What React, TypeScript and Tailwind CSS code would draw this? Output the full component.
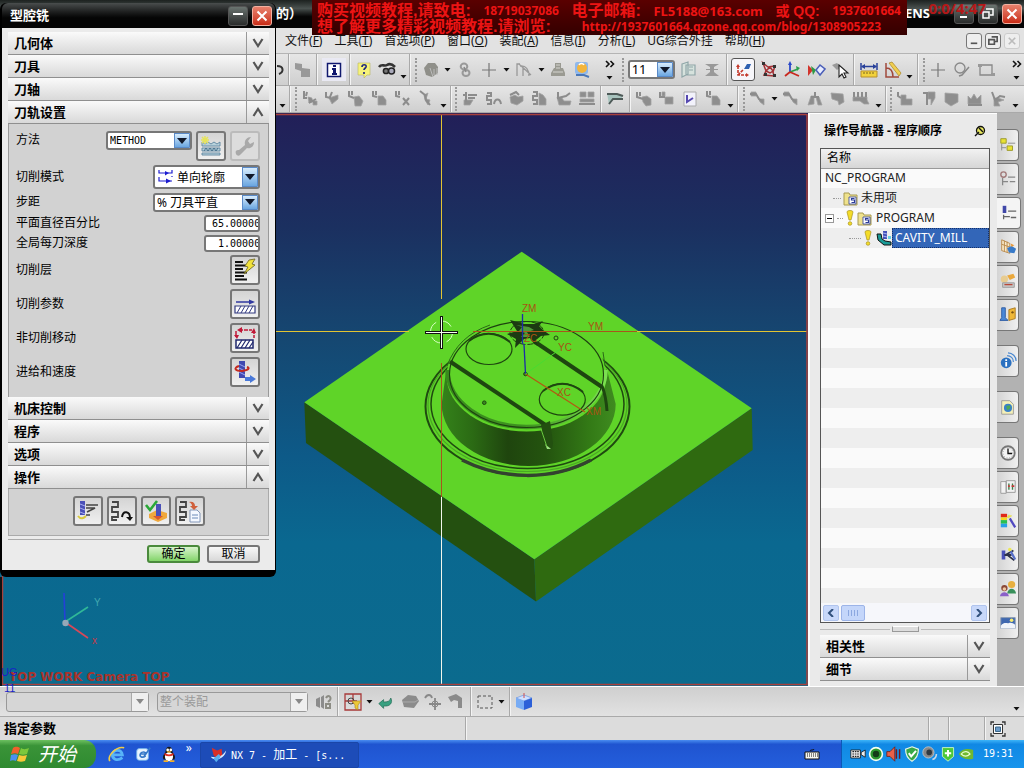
import React from "react";

type Kids = { children?: React.ReactNode };

const CJK = "font-['Noto_Sans','Noto_Sans_CJK_SC',sans-serif]";

/* ---------- small drawing helpers ---------- */

function Ic({ children, size = "size-5" }: Kids & { size?: string }) {
  return (
    <svg viewBox="0 0 20 20" className={`${size} shrink-0`} fill="none" aria-hidden="true">
      {children}
    </svg>
  );
}

function Tool({ label, children, active, framed }: Kids & { label: string; active?: boolean; framed?: boolean }) {
  const look = active
    ? "h-[23px] w-6 border border-[#555] rounded-[3px] bg-[#f6f6fa]"
    : framed
      ? "h-[23px] w-6 bg-[#e9e9f3]"
      : "h-[22px] w-5";
  return (
    <button type="button" aria-label={label} className={`flex shrink-0 items-center justify-center ${look}`}>
      {children}
    </button>
  );
}

function Caret({ low }: { low?: boolean }) {
  return (
    <svg viewBox="0 0 7 4" className={`h-1 w-[7px] shrink-0 ${low ? "mt-3.5" : ""}`} aria-hidden="true">
      <path d="M0.5 0h6L3.5 3.6z" fill="#111" />
    </svg>
  );
}

function Sep() {
  return <span className="h-full w-0.5 shrink-0 border-l border-r border-l-[#a9a9a9] border-r-[#f4f4f4]" />;
}

function Grip() {
  return <span className="h-6 w-0.5 shrink-0 border-l-2 border-dotted border-[#999]" />;
}

function More() {
  return (
    <div className="flex h-6 w-3 shrink-0 flex-col items-center justify-between py-0.5">
      <svg viewBox="0 0 10 8" className="h-2 w-2.5" fill="none" stroke="#111" strokeWidth="1.6" aria-hidden="true">
        <path d="M1 1l3 3-3 3M5.5 1l3 3-3 3" />
      </svg>
      <Caret />
    </div>
  );
}

/* ---------- grey tool path glyphs ---------- */

const greyShapes: string[][] = [
  ["M4 2v7h3M7 3l-1 4M9 9l6 5M9 14l7-4", "M8 8l4 1v4l-3 1zM13 12h4v4h-4z"],
  ["M3 3v5l5 1M9 3l-2 5", "M6 9l9-3v4l-6 5z"],
  ["M3 2v5l5 2M6 2v4", "M8 8l5-1 4 5-2 5H9z"],
  ["M3 2v5l4 1M6 2v4", "M8 7h5l3 4v5H8z"],
  ["M3 2v5l4 1M6 2v4M10 9l6 7M16 9l-6 7", ""],
  ["M4 2l5 4 1 5 4 5", "M8 6l4-2-2 6 4 1-2 5-3-5z"],
  ["M6 3v10M3 6h4M8 6h9M8 9h7", "M4 11h9l-3 5H4z"],
  ["M3 4h4v3H3v4h4v4H3M10 15c1-6 6-6 7 0", ""],
  ["M3 6l6-3 3 3", "M3 8l5-2 3 2 5-1v5l-6 4-6-2z"],
  ["M3 3h4v4H3v4h4v4H3", "M9 4l4 2 3 4v6H9v-4z"],
  ["M4 3v6l8-2 4-3", "M3 8l5 1 2 3h7l-1 4H5z"],
  ["M2 15h16", "M3 3h6v5H3zM11 3h6v5h-6zM3 10h14v3H3z"],
  ["M3 3v5l6 2M6 3v4", "M8 8l5-1 4 3v6l-5 1-3-4z"],
  ["M3 3v5h5", "M8 8h8v7H8zM5 3h3v4H5z"],
  ["M2 5l6 0 3 5 4 3", "M3 3h5v4H3zM11 10h5v6l-4-3z"],
  ["M10 3v5M6 8h8", "M3 16l3-9h3v8zM11 8h3l3 8h-4z"],
  ["", "M3 4l12 1 1 8-5 3-1-4-6-2z"],
  ["M3 3v5M7 3v5M11 3v5M15 3v5", "M2 8h14v3l2 4h-5l-4-3H2z"],
  ["M3 3v4l3 2", "M6 6h5v4h6v6H6z"],
  ["M4 4h4v12", "M9 3h7v6l-4 7v-6H9z"],
  ["", "M3 4l13 1v8l-7 4-6-4z"],
  ["M3 16h14", "M3 15V7l3 3 3-5 3 5 4-4v9z"],
  ["M3 3l3 8 5-4 5 1", "M5 9h4l6 2-6 2 2 4H5z"],
];

function Grey({ n }: { n: number }) {
  const [line, area] = greyShapes[n];
  return (
    <Tool label={`加工工具 ${n + 1}`}>
      <Ic>
        {area && <path d={area} fill="#8e8e8e" stroke="#a2a2a2" strokeWidth="0.8" />}
        {line && <path d={line} stroke="#8c8c8c" strokeWidth="2" />}
      </Ic>
    </Tool>
  );
}

/* ---------- top bars ---------- */

function WinButton({ label, red, children }: Kids & { label: string; red?: boolean }) {
  return (
    <button
      type="button"
      aria-label={label}
      className={`flex size-5 shrink-0 items-center justify-center rounded-[3px] border ${
        red
          ? "border-[#f2b0a0] bg-linear-to-b from-[#e8806c] to-[#c92a14]"
          : "border-[#555] bg-linear-to-b from-[#6a7470] to-[#2a2c2c]"
      }`}
    >
      <svg viewBox="0 0 14 14" className="size-3.5" fill="none" stroke="#fff" strokeWidth="2" aria-hidden="true">
        {children}
      </svg>
    </button>
  );
}

const cross = <path d="M2.5 2.5l9 9M11.5 2.5l-9 9" />;

function TitleBar() {
  return (
    <header className="flex h-7 shrink-0 items-center bg-linear-to-b from-[#1d2220] via-[#4a5250] via-30% to-[#050505] to-60% pl-[276px] text-[13px] font-bold text-white">
      <span>的）</span>
      <span className="ml-auto">ENS</span>
      <div className="ml-6 flex gap-1 pr-0.5">
        <WinButton label="最小化">
          <path d="M3 10h7" />
        </WinButton>
        <WinButton label="还原">
          <path d="M5 2h7v6H9M2 5h6v6H2z" strokeWidth="1.5" />
        </WinButton>
        <WinButton label="关闭" red>
          {cross}
        </WinButton>
      </div>
    </header>
  );
}

const menus: [string, string][] = [
  ["文件", "F"],
  ["工具", "T"],
  ["首选项", "P"],
  ["窗口", "O"],
  ["装配", "A"],
  ["信息", "I"],
  ["分析", "L"],
  ["UG综合外挂", ""],
  ["帮助", "H"],
];

function MenuBar() {
  return (
    <nav className="flex h-[26px] shrink-0 items-center border-b border-[#b4b4b4] bg-[#e2e2e2] pl-[285px] text-xs text-[#111]">
      <div className="flex gap-3">
        {menus.map(([name, key]) => (
          <button type="button" key={name} className="shrink-0 whitespace-nowrap">
            {name}
            {key && (
              <>
                (<span className="underline">{key}</span>)
              </>
            )}
          </button>
        ))}
      </div>
      <div className="ml-auto flex gap-[3px] pr-1">
        {["M3 9h7", "M5 2h6v5H8M2 5h6v5H2z", "M3 3l7 7M10 3l-7 7"].map((d, i) => (
          <button
            type="button"
            key={d}
            aria-label={["最小化窗口", "还原窗口", "关闭窗口"][i]}
            className={`flex size-4 items-center justify-center rounded-[3px] border bg-[#eee] ${
              i === 2 ? "border-[#ccc] text-[#bbb]" : "border-[#777] text-[#555]"
            }`}
          >
            <svg viewBox="0 0 13 13" className="size-3" fill="none" stroke="currentColor" strokeWidth="1.8" aria-hidden="true">
              <path d={d} />
            </svg>
          </button>
        ))}
      </div>
    </nav>
  );
}

const bar = "flex shrink-0 items-center border-b border-b-[#a9a9a9] bg-linear-to-b from-[#e6e6e6] to-[#cfcfcf]";

function PlusIcon() {
  return (
    <Ic>
      <path d="M10 3v14M3 10h14" stroke="#777" strokeWidth="1.2" />
    </Ic>
  );
}

function ToolbarOne() {
  return (
    <div className={`${bar} h-8 gap-0.5 pl-[277px] pr-px`}>
      <div className="flex h-full w-[130px] shrink-0 items-center justify-between">
        <svg viewBox="0 0 8 12" className="h-3 w-2 shrink-0" fill="none" stroke="#333" strokeWidth="2" aria-hidden="true">
          <path d="M0 2c7 0 7 6 2 8" />
        </svg>
        <Sep />
        <Tool label="部件">
          <Ic>
            <path d="M2 3l7 1v4l8 1v8H8v-6l-6-2z" fill="#999" />
          </Ic>
        </Tool>
        <Sep />
        <Tool label="信息" framed>
          <Ic>
            <rect x="3.5" y="3.5" width="13" height="13" fill="#fff" stroke="#10186e" strokeWidth="1.5" />
            <path d="M9 5h3v2H9zM8 8h4v5h1v2H8v-2h1v-3H8z" fill="#10186e" />
          </Ic>
        </Tool>
        <Sep />
        <Tool label="帮助">
          <Ic>
            <path d="M4 3h12v12h-3l-3 3v-3H4z" fill="#f6f27a" stroke="#b9b560" strokeWidth="0.6" />
            <path d="M8 7c0-3 5-3 4 0-.5 1.300-2 1.500-2 3M10 12v2" stroke="#222a80" strokeWidth="1.7" />
          </Ic>
        </Tool>
        <Tool label="查找">
          <Ic>
            <path d="M2 7c3-4 5 0 8-2s6 0 8 2" stroke="#333" strokeWidth="2.600" />
            <circle cx="9" cy="11" r="2.600" fill="#777" stroke="#222" strokeWidth="1.500" />
            <circle cx="14.500" cy="11" r="3" fill="#aab" stroke="#222" strokeWidth="1.500" />
          </Ic>
        </Tool>
        <Caret low />
      </div>
      <div className="flex h-full w-[207px] shrink-0 items-center justify-between">
        <Sep />
        <Grip />
        <Tool label="可视化">
          <Ic>
            <path d="M3 8l4-5h7l3 4v6l-6 4-6-2z" fill="#8f8f89" />
            <path d="M13 9v6M16 8v7M9 8l3 9" stroke="#bbb" strokeWidth="1" />
          </Ic>
        </Tool>
        <Caret />
        <Tool label="链接">
          <Ic>
            <ellipse cx="9" cy="6.500" rx="3.300" ry="3" stroke="#999" strokeWidth="2" />
            <ellipse cx="11" cy="13" rx="3.500" ry="3" stroke="#999" strokeWidth="2" />
            <path d="M9 7l2 5" stroke="#888" strokeWidth="1.500" />
          </Ic>
        </Tool>
        <Tool label="点">
          <PlusIcon />
        </Tool>
        <Caret />
        <Tool label="曲线">
          <Ic>
            <path d="M3 16V4h3M6 6c6-1 9 4 9 10M5 4l12 11M9 16V8" stroke="#999" strokeWidth="1.300" />
          </Ic>
        </Tool>
        <Caret />
        <Tool label="图层">
          <Ic>
            <path d="M7 3h6v5h2l2 5v3H3v-3l3-5h1z" fill="#9a9a92" />
            <path d="M5 12h10M8 5h4M8 8h4" stroke="#d5d5d0" />
          </Ic>
        </Tool>
        <Tool label="渲染">
          <Ic>
            <rect x="3" y="2" width="13" height="12" rx="2" fill="#8fb8ec" />
            <circle cx="10" cy="8" r="5" fill="#f3b53c" />
            <path d="M7 5c1-2 4-2 5 0" stroke="#fff" strokeWidth="1.500" />
            <path d="M4 15h8l5 2" stroke="#4b78b8" strokeWidth="2" />
          </Ic>
        </Tool>
        <span className="w-1" />
        <More />
      </div>
      <div className="ml-1 flex h-full flex-1 items-center justify-between">
        <Grip />
        <DropDown label="图层号" value="11" className="h-[19px] w-[47px]" size="text-[13px]" />
        <Tool label="图层设置">
          <Ic>
            <path d="M4 4l6-2v12l-6 3zM8 5h9v10H8z" fill="#d6e2dd" stroke="#8fa6a8" strokeWidth="1.200" />
            <path d="M11 7h4M11 10h4" stroke="#8fa6a8" />
          </Ic>
        </Tool>
        <Tool label="移动图层">
          <Ic>
            <path d="M3 4h14l-5 3h-4zM3 16h14l-5-4h-4zM8 7h4v5H8zM4 9h12v1H4z" fill="#999" />
          </Ic>
        </Tool>
        <Sep />
        <Tool label="坐标系方位" active>
          <Ic>
            <path d="M5 6v9h9M5 15l5-5" stroke="#c3392c" strokeWidth="1.600" strokeDasharray="3 1" />
            <path d="M3 7l2-3 2 3M13 13l3 2-3 2" fill="#c3392c" />
            <path d="M11 9l3-5h4l-2 5z" fill="#2d5fb0" />
          </Ic>
        </Tool>
        <Tool label="坐标变换">
          <Ic>
            <path d="M4 3l3 8-2 4 10 1-1-4 2-6-7 1z M7 11l4 2 3-2-3-4z" stroke="#a33034" strokeWidth="1.500" />
            <path d="M3 2h3v3H3zM14 5h3v3h-3zM5 13h3v3H5zM14 14h3v3h-3z" fill="#333" />
          </Ic>
        </Tool>
        <Tool label="动态坐标系">
          <Ic>
            <path d="M8 12V4" stroke="#2a48c8" strokeWidth="1.800" />
            <path d="M8 12l8-3" stroke="#2aa04a" strokeWidth="1.800" />
            <path d="M8 12l-5 4M8 12l9 4" stroke="#c8281e" strokeWidth="1.800" />
            <path d="M6 5l2-4 2 4z" fill="#2a48c8" />
            <path d="M14 6l4 2-3 3z" fill="#2aa04a" />
          </Ic>
        </Tool>
        <Tool label="方向">
          <Ic>
            <path d="M2 5l5 5-5 6z" fill="#d2342c" />
            <path d="M5 6l5 4-3 5z" fill="#2f9a44" />
            <path d="M10 10l4-5 5 4-5 6z" fill="#e8ecff" stroke="#4a5eb8" strokeWidth="1.500" />
          </Ic>
        </Tool>
        <Tool label="选择">
          <Ic>
            <path d="M2 5l5-2 4 4-4 3z" fill="#999" />
            <path d="M9 5v12l3-3 2 4 2-1-2-4h4z" fill="#fff" stroke="#222" strokeWidth="1.100" />
          </Ic>
        </Tool>
        <Sep />
        <Tool label="测量距离">
          <Ic>
            <path d="M2 3v7M18 3v7M3 6.500h14" stroke="#28409a" strokeWidth="1.500" />
            <path d="M2 6.500l4-2.500v5zM18 6.500l-4-2.500v5z" fill="#28409a" />
            <path d="M2 11h16v6H2z" fill="#f2d23c" stroke="#b8902c" />
            <path d="M5 12v2M8 12v2M11 12v2M14 12v2" stroke="#7b6420" />
          </Ic>
        </Tool>
        <Tool label="测量角度">
          <Ic>
            <path d="M3 3v14h13M3 8c5 0 7 4 7 9" stroke="#a04a3c" strokeWidth="1.500" />
            <path d="M6 3l3-1 9 11-2 3z" fill="#f0cf50" stroke="#b08c30" strokeWidth="0.800" />
          </Ic>
        </Tool>
        <Caret low />
        <Sep />
        <Grip />
        <Tool label="草图点">
          <PlusIcon />
        </Tool>
        <Tool label="圆">
          <Ic>
            <circle cx="8" cy="8" r="5" stroke="#888" strokeWidth="1.300" />
            <path d="M7 16l3-1 7-8" stroke="#888" strokeWidth="1.500" />
          </Ic>
        </Tool>
        <Tool label="矩形">
          <Ic>
            <path d="M4 5h12v10H4z" stroke="#888" strokeWidth="1.300" />
            <path d="M2 4h4v3H2zM15 13h4v3h-4z" fill="#999" />
          </Ic>
        </Tool>
        <span className="w-2" />
        <More />
      </div>
    </div>
  );
}

function ToolbarTwo() {
  return (
    <div className={`${bar} h-[27px] justify-between pl-[279px] pr-[5px]`}>
      <Caret low />
      <Sep />
      <Grip />
      {[0, 1, 2, 3, 4, 5].map((n) => (
        <Grey key={n} n={n} />
      ))}
      <Caret low />
      <Sep />
      <Grip />
      {[6, 7, 8, 9, 10, 11].map((n) => (
        <Grey key={n} n={n} />
      ))}
      <Sep />
      <Tool label="加工">
        <Ic>
          <path d="M2 4h9l6 3v4l-9-1-4 6" fill="#a8c4be" />
          <path d="M2 5h10l6 2M4 15l4-5h10" stroke="#4e5a58" strokeWidth="2" />
        </Ic>
      </Tool>
      <Sep />
      <Grey n={12} />
      <Grey n={13} />
      <Tool label="后处理">
        <Ic>
          <path d="M4 3h12v14H4z" fill="#f2f2fb" stroke="#aaa" />
          <path d="M7 6v7l6-4" stroke="#5548b0" strokeWidth="2" />
        </Ic>
      </Tool>
      <Grey n={3} />
      <Caret low />
      <Sep />
      <Grip />
      <Grey n={14} />
      <Caret />
      <Grey n={14} />
      <Grey n={15} />
      <Grey n={16} />
      <Grey n={17} />
      <Caret low />
      <Sep />
      <Grip />
      {[18, 19, 20, 21, 22].map((n) => (
        <Grey key={n} n={n} />
      ))}
      <Caret low />
    </div>
  );
}

function PromoBanner() {
  const han = "font-['Liberation_Sans','Noto_Sans_CJK_SC',sans-serif]";
  return (
    <aside className="absolute left-[312px] top-0 flex h-[35px] w-[595px] flex-col bg-linear-to-b from-[#5a0000] to-[#340000] pl-[5px] pr-1.5 pt-[3px] text-xs font-bold text-[#ec1414]">
      <p className="flex h-4 items-center justify-between whitespace-nowrap leading-4">
        <span className={`${han} text-base leading-4`}>购买视频教程,请致电:</span>
        <span className="leading-4">18719037086</span>
        <span className={`${han} text-base leading-4`}>电子邮箱:</span>
        <span className="text-[13px] leading-4">FL5188@163.com</span>
        <span className={`${han} text-[14px] leading-4`}>或 QQ:</span>
        <span className="leading-4">1937601664</span>
      </p>
      <p className="flex h-4 items-center justify-between whitespace-nowrap pr-5 leading-4">
        <span className={`${han} text-base leading-4`}>想了解更多精彩视频教程.请浏览:</span>
        <span className="leading-4">http://1937601664.qzone.qq.com/blog/1308905223</span>
      </p>
    </aside>
  );
}

/* ---------- shared form parts ---------- */

function DropDown({
  id,
  label,
  value,
  className,
  size = "text-xs",
  icon,
}: {
  id?: string;
  label?: string;
  value: string;
  className: string;
  size?: string;
  icon?: React.ReactNode;
}) {
  return (
    <div className={`relative flex shrink-0 items-center overflow-hidden rounded-[3px] border-2 border-[#777] bg-white ${className}`}>
      {icon}
      <select
        id={id}
        aria-label={label}
        className={`h-full w-full appearance-none bg-transparent pl-0.5 pr-4 text-black outline-none ${size} leading-[15px]`}
      >
        <option>{value}</option>
      </select>
      <span className="pointer-events-none absolute inset-y-0 right-0 flex w-4 items-center justify-center border border-[#5a8ac8] bg-linear-to-b from-[#d8ecfc] to-[#6aa6e0]">
        <svg viewBox="0 0 10 6" className="h-1.5 w-2.5" aria-hidden="true">
          <path d="M0 0h10L5 6z" fill="#10182a" />
        </svg>
      </span>
    </div>
  );
}

function Section({ title, open }: { title: string; open?: boolean }) {
  return (
    <button
      type="button"
      aria-expanded={!!open}
      className="flex h-[23px] w-full shrink-0 items-stretch border-b border-[#8f8f8f] bg-linear-to-b from-[#fafafa] to-[#d9d9d9] text-left text-[13px] font-bold text-black"
    >
      <span className="flex flex-1 items-center pl-1.5 leading-none">{title}</span>
      <span className="flex w-[23px] items-center justify-center border-l border-[#999]">
        <svg viewBox="0 0 12 10" className="h-2.5 w-3" fill="none" stroke="#555" strokeWidth="2.200" aria-hidden="true">
          <path d={open ? "M1.500 9L6 2l4.500 7" : "M1.500 1L6 8l4.500-7"} />
        </svg>
      </span>
    </button>
  );
}

function IconButton({ label, id, children, disabled }: Kids & { label: string; id?: string; disabled?: boolean }) {
  return (
    <button
      type="button"
      id={id}
      aria-label={label}
      disabled={disabled}
      className={`flex size-[30px] shrink-0 items-center justify-center rounded-[3px] border-2 ${
        disabled ? "border-[#bbb] bg-[#dcdcdc]" : "border-[#777] bg-linear-to-b from-[#d4d4d4] to-[#f0f0f0]"
      }`}
    >
      <svg viewBox="0 0 24 24" className="size-6" fill="none" aria-hidden="true">
        {children}
      </svg>
    </button>
  );
}

/* ---------- operation dialog ---------- */

function Row({ name, id, children, h, top }: Kids & { name: string; id: string; h: string; top?: boolean }) {
  return (
    <div className={`flex ${top ? "items-start" : "items-center"} ${h}`}>
      <label htmlFor={id} className="mr-auto leading-[18px]">
        {name}
      </label>
      {children}
    </div>
  );
}

const inputStyle =
  "h-[17px] w-14 rounded-[3px] border-2 border-[#777] bg-white pl-1.5 font-['DejaVu_Sans_Mono',monospace] text-[10px] text-black outline-none";

function MillDialog() {
  return (
    <section
      aria-label="型腔铣"
      className="absolute left-0 top-[3px] flex w-[276px] flex-col rounded-t-md rounded-b-md bg-black pb-[7px] pl-0.5 pr-px text-xs text-black"
    >
      <header className="flex h-[25px] items-center gap-1 rounded-t-md bg-linear-to-b from-[#4a4e4e] to-[#050505] to-60% pl-2 pr-[3px] text-[13px] font-bold text-white">
        <h1 className="mr-auto">型腔铣</h1>
        <WinButton label="收起">
          <path d="M2 5h10" />
        </WinButton>
        <WinButton label="关闭对话框" red>
          {cross}
        </WinButton>
      </header>
      <div className="bg-[#ebebeb] px-1.5 pb-[7px] pt-1">
        <Section title="几何体" />
        <Section title="刀具" />
        <Section title="刀轴" />
        <Section title="刀轨设置" open />
        <div className="flex flex-col gap-1 border-x border-[#999] bg-[#d2d2d2] pb-2.5 pl-[7px] pr-2 pt-[7px]">
          <Row name="方法" id="method" h="h-[30px]" top>
            <DropDown id="method" value="METHOD" className="mr-1 h-[19px] w-[86px]" size="font-['DejaVu_Sans_Mono',monospace] text-[10px]" />
            <div className="flex gap-1">
              <IconButton label="新建方法">
                <path d="M3 8l3 2 3-2 3 2 3-2 3 2 3-2v4H3zM3 14h18v3H3zM3 19h18v2H3z" fill="#b8d2dc" stroke="#5d86a0" strokeWidth="0.900" />
                <path d="M5 17l2-3 2 3 2-3 2 3 2-3 2 3 2-3" stroke="#46708c" />
                <path d="M6 2v8M2 6h8M3 3l6 6M9 3L3 9" stroke="#e6e45a" strokeWidth="1.500" />
              </IconButton>
              <IconButton label="编辑方法" disabled>
                <path d="M3 20c-1-3 0-4 3-4l6-5c-1-5 2-8 6-8l-3 4 2 3 4-2c0 5-4 7-7 6l-7 7c-1 1-3 1-4-1z" fill="#a9a9a9" />
              </IconButton>
            </div>
          </Row>
          <Row name="切削模式" id="pattern" h="h-6">
            <DropDown
              id="pattern"
              value="单向轮廓"
              className="h-6 w-[107px]"
              icon={
                <svg viewBox="0 0 18 16" className="ml-0.5 h-4 w-[18px] shrink-0" fill="none" stroke="#1c1cd0" strokeWidth="1.200" aria-hidden="true">
                  <path d="M2 1v3h13V1M2 8v4h13M15 8v-1" />
                  <path d="M8 2l4 2-4 2.500zM9 9.500l5 2.500-5 2.500z" fill="#1c1cd0" stroke="none" />
                </svg>
              }
            />
          </Row>
          <Row name="步距" id="step" h="h-[18px]">
            <DropDown id="step" value="% 刀具平直" className="h-[19px] w-[107px]" />
          </Row>
          <Row name="平面直径百分比" id="percent" h="h-4">
            <input id="percent" defaultValue="65.00000" className={inputStyle} />
          </Row>
          <Row name="全局每刀深度" id="depth" h="h-4">
            <input id="depth" defaultValue=" 1.00000" className={inputStyle} />
          </Row>
          <Row name="切削层" id="levels" h="h-[30px]">
            <IconButton id="levels" label="切削层">
              <path d="M2 4h8M2 7.500h12M2 11h8M2 14.500h12M2 18h9M2 21.500h12" stroke="#111" strokeWidth="2" />
              <path d="M16 2l6-1-3 5 3 1-11 9 4-7-3-1z" fill="#f2e23c" stroke="#77702a" strokeWidth="0.900" />
            </IconButton>
          </Row>
          <Row name="切削参数" id="params" h="h-[30px]">
            <IconButton id="params" label="切削参数">
              <path d="M3 10h14" stroke="#3038a0" strokeWidth="1.500" />
              <path d="M16 7.500l6 2.500-6 2.500z" fill="#3038a0" />
              <path d="M2 14h20v7H2z" fill="#fff" stroke="#333a80" strokeWidth="1.200" />
              <path d="M4 21l4-7M8 21l4-7M12 21l4-7M16 21l4-7" stroke="#333a80" />
            </IconButton>
          </Row>
          <Row name="非切削移动" id="noncut" h="h-[30px]">
            <IconButton id="noncut" label="非切削移动">
              <path d="M3 5v6M6 4h13M21 4v8" stroke="#c01838" strokeWidth="1.500" strokeDasharray="4 1" />
              <path d="M1 9h5l-2 4zM9 1v6L4 4zM18 7l3-5 2 5z" fill="#c01838" />
              <path d="M3 14h17v8H3z" fill="#fff" stroke="#20286e" strokeWidth="1.500" />
              <path d="M4 22l5-8M8 22l5-8M12 22l5-8M16 22l4-6" stroke="#20286e" strokeWidth="1.200" />
            </IconButton>
          </Row>
          <Row name="进给和速度" id="feeds" h="h-[30px]">
            <IconButton id="feeds" label="进给和速度">
              <path d="M6 1h6v17H6z" fill="#4048b0" />
              <path d="M6 4l6 3M6 8l6 3M6 12l6 3" stroke="#98a4f0" />
              <path d="M6 6c-6 2-4 5 3 5 7-1 8-3 5-4" stroke="#c42a20" strokeWidth="2" />
              <path d="M12 17h5v-2l6 4-6 4v-2h-5z" fill="#4878d8" />
            </IconButton>
          </Row>
        </div>
        <Section title="机床控制" />
        <Section title="程序" />
        <Section title="选项" />
        <Section title="操作" open />
        <div className="flex h-[47px] justify-center gap-1 border-x border-b border-[#aaa] bg-[#d2d2d2] pt-[7px]">
          <IconButton label="生成">
            <path d="M4 2h5v14H4z" fill="#4a50b8" />
            <path d="M4 5l5 2M4 9l5 2M4 13l5 2" stroke="#a8b0f0" />
            <path d="M10 6h12M10 9h9l-8 4M10 16h4" stroke="#444" strokeWidth="1.600" />
            <path d="M2 17c3 4 6 2 8 0" stroke="#d8c93c" strokeWidth="2" />
          </IconButton>
          <IconButton label="重播">
            <path d="M2 3h6v5H2v5h6v5H2v3h5" stroke="#444" strokeWidth="1.800" />
            <path d="M12 18c1-7 8-6 8 1" stroke="#111" strokeWidth="2" />
            <path d="M16 18h7l-3 4z" fill="#111" />
          </IconButton>
          <IconButton label="确认">
            <path d="M5 15l8-4 10 3v5l-9 4-9-4z" fill="#f0a83c" />
            <path d="M9 17h10l-5 4z" fill="#d85830" />
            <path d="M12 5h5v12h-5z" fill="#4a50b8" />
            <path d="M2 6l4 5 7-9" stroke="#2aa838" strokeWidth="2.600" />
          </IconButton>
          <IconButton label="列表">
            <path d="M2 3h6v5H2v5h6v5H2v3h5" stroke="#444" strokeWidth="1.800" />
            <path d="M12 11h7l3 3v9H12z" fill="#f4f8ff" stroke="#8296b8" />
            <path d="M14 16h6M14 19h6" stroke="#6a8ab8" />
            <path d="M11 3c4-1 6 1 6 4h3l-4 4-4-4h2c0-2-1-3-3-4z" fill="#d0603c" />
          </IconButton>
        </div>
        <footer className="mt-[3px] flex justify-end gap-[7px] border-t border-[#aaa] pr-[9px] pt-[5px]">
          <button type="button" className="flex h-[18px] w-[53px] items-center justify-center rounded-[3px] border-2 border-[#4a8a3c] bg-linear-to-b from-[#d8f4cc] to-[#82d468] leading-none">
            确定
          </button>
          <button type="button" className="flex h-[18px] w-[53px] items-center justify-center rounded-[3px] border-2 border-[#777] bg-linear-to-b from-[#f8f8f8] to-[#d8d8d8] leading-none">
            取消
          </button>
        </footer>
      </div>
    </section>
  );
}

/* ---------- model view ---------- */

function ModelView() {
  return (
    <main className="min-w-0 flex-1 overflow-hidden bg-[#0a6a90]">
      <svg viewBox="0 113 808 573" className="h-full w-full" preserveAspectRatio="xMidYMid slice" role="img" aria-label="TOP WORK">
        <defs>
          <linearGradient id="sky" x1="0" y1="0" x2="0" y2="1">
            <stop offset="0" stopColor="#221f58" />
            <stop offset="0.200" stopColor="#1b3060" />
            <stop offset="0.400" stopColor="#154872" />
            <stop offset="0.600" stopColor="#0d5a88" />
            <stop offset="0.750" stopColor="#0a6890" />
            <stop offset="1" stopColor="#0b6b8e" />
          </linearGradient>
          <linearGradient id="wall" x1="0" y1="0" x2="1" y2="0">
            <stop offset="0" stopColor="#34821a" />
            <stop offset="0.180" stopColor="#2b6a14" />
            <stop offset="0.380" stopColor="#1f450e" />
            <stop offset="0.600" stopColor="#24540f" />
            <stop offset="0.850" stopColor="#337a16" />
            <stop offset="1" stopColor="#3f8c20" />
          </linearGradient>
          <linearGradient id="rim" x1="0" y1="0" x2="1" y2="0">
            <stop offset="0" stopColor="#388a1c" />
            <stop offset="0.500" stopColor="#3f9420" />
            <stop offset="1" stopColor="#7be050" />
          </linearGradient>
        </defs>
        <rect x="0" y="113" width="808" height="573" fill="url(#sky)" />
        <path d="M304.300 402.300L534.300 559.300L536 601.500L306 443z" fill="#245010" />
        <path d="M534.300 559.300L751.700 408.300L752.700 450L536 601.500z" fill="#2f6a10" />
        <path d="M521.700 251.700L751.700 408.300L534.300 559.300L304.300 402.300z" fill="#5fd428" />

        <g fill="none">
          <ellipse cx="527.500" cy="406.500" rx="102" ry="69" stroke="#1f4a10" strokeWidth="2" />
          <ellipse cx="527.500" cy="405" rx="99.500" ry="66.500" stroke="#4aa824" strokeWidth="1.200" />
          <ellipse cx="527.500" cy="404" rx="96.500" ry="64.500" stroke="#1f4a10" strokeWidth="1.500" />
          <path d="M462 460c40 20 90 21 129 0" stroke="#33422f" strokeWidth="3.500" />
        </g>
        <path d="M446.500 368L441.700 404A87 62 0 0 0 615.700 404L606.500 368A80 58 0 0 1 446.500 368z" fill="url(#wall)" />
        <ellipse cx="526.500" cy="376" rx="80" ry="55.500" fill="#5fd428" />
        <path d="M447.500 370A79 57 0 0 0 605.500 370" stroke="url(#rim)" strokeWidth="4.500" fill="none" />
        <ellipse cx="526.500" cy="374.500" rx="77" ry="53" fill="none" stroke="#1d4010" strokeWidth="1.100" />
        <path d="M447 366Q458 336 490 325M605 366l-2-14" stroke="#2b6a18" fill="none" />

        <g fill="none" stroke="#1e4610">
          <ellipse cx="489" cy="349" rx="23" ry="15.500" strokeWidth="1.200" />
          <path d="M469 341Q489 326 510 342" strokeWidth="2" />
          <ellipse cx="562.300" cy="399.500" rx="23" ry="15.700" strokeWidth="1.200" />
          <path d="M543 391Q563 376 583 392" strokeWidth="2" />
          <path d="M450 361.500L547 426" strokeWidth="4" />
          <path d="M536.700 343L602 387" strokeWidth="4" />
          <path d="M602 386q4 10 5 25" strokeWidth="3" />
          <ellipse cx="527" cy="333" rx="17" ry="11.500" strokeWidth="1" strokeDasharray="6 2" />
          <circle cx="484.300" cy="402.700" r="1.800" fill="#3a8a20" />
          <circle cx="556" cy="338" r="2" />
          <circle cx="525.500" cy="374" r="1.800" fill="#3a8a20" />
        </g>
        <path d="M541 425l9-4 3 22-1 6-6 0z" fill="#235010" />
        <path d="M545 444l6 5h-4z" fill="#9be080" />
        <path d="M541 429l6 18" stroke="#69c840" fill="none" />
        <path
          d="M510 320l8 2 6 2h10l9-3-4 5 4 4 7 5-9 1-5 4 2 6-4-2-4-6-6 1-5 5-4 4 1-9-9-5 10-3z"
          fill="#1c3a12"
        />
        <path d="M516 325l6 2-3 4 6 2-4 4 9 0-3-5 7-2-5-3" fill="#4e9a38" />

        <g fill="none" strokeWidth="1" shapeRendering="crispEdges">
          <path d="M276 331.500H409M637 331.500H807M441.500 114V299" stroke="#e2c432" />
          <path d="M473 331.500H637M441.500 363V497" stroke="#a8561c" />
          <path d="M441.500 497V684" stroke="#f2f6ec" />
        </g>
        <g fill="none">
          <circle cx="441.500" cy="332" r="11" stroke="#d6ffc0" strokeDasharray="12 5" />
          <path d="M441.500 316V349M425 332.500H458" stroke="#111" strokeWidth="3" />
          <path d="M441.500 317V348M426 332.500H457" stroke="#f4fff0" strokeWidth="1" />
        </g>

        <path d="M522.500 314V344" stroke="#1c2ca8" strokeWidth="1.300" />
        <path d="M524 344l1.500 30" stroke="#1c2ca8" strokeWidth="1.300" />
        <path d="M525.500 374L585 412" stroke="#b45812" strokeWidth="1.200" />
        <path d="M525.500 374L577 337" stroke="#48dc30" strokeWidth="1" />
        <g fill="#a85214" className="font-['Liberation_Sans',sans-serif] text-[10px]">
          <text x="522" y="312">ZM</text>
          <text x="588" y="330">YM</text>
          <text x="524" y="342">ZC</text>
          <text x="558" y="351">YC</text>
          <text x="557" y="396">XC</text>
          <text x="586" y="415">XM</text>
        </g>

        <g strokeWidth="1.600">
          <path d="M65 622L64 593" stroke="#2440d8" />
          <path d="M65 622L88 607" stroke="#30b898" />
          <path d="M65 622L88 638" stroke="#d84858" />
        </g>
        <circle cx="65.500" cy="623" r="3.200" fill="#94a8b8" />
        <g className="font-['Liberation_Sans',sans-serif] text-[10px]">
          <text x="94" y="606" fill="#40a8b0">
            Y
          </text>
          <text x="92" y="644" fill="#c83848">
            x
          </text>
        </g>
        <text x="9" y="681" fill="#a8342c" className="font-['DejaVu_Sans',sans-serif] text-[12px] font-bold">
          TOP WORK Camera TOP
        </text>
        <path d="M2.500 684V114.500H806.500M807 114V684.500H2" stroke="#a8403c" strokeWidth="1.500" fill="none" />
        <text x="1" y="676" fill="#1822c8" className="font-['Liberation_Sans',sans-serif] text-[11px]">
          UG
        </text>
        <rect x="0" y="577" width="2" height="109" fill="#111" />
      </svg>
    </main>
  );
}

/* ---------- operation navigator ---------- */

function Folder() {
  return (
    <svg viewBox="0 0 16 16" className="size-4 shrink-0" aria-hidden="true">
      <path d="M1 3h5l1 2h7v10H1z" fill="#efe28c" stroke="#a89a50" />
      <path d="M6 7h7v7H6z" fill="#fff" stroke="#2c3c9a" strokeWidth="0.800" />
      <path d="M11.500 8.500h-3v1.500h3v2.500h-3" stroke="#2c3c9a" strokeWidth="1.200" fill="none" />
    </svg>
  );
}

function Bang() {
  return (
    <svg viewBox="0 0 8 16" className="h-4 w-2 shrink-0" aria-hidden="true">
      <path d="M1 2c0-2 6-2 6 0L5 10H3z" fill="#f4dc28" stroke="#a89420" strokeWidth="0.700" />
      <circle cx="4" cy="13.500" r="1.800" fill="#f4dc28" stroke="#a89420" strokeWidth="0.700" />
    </svg>
  );
}

function Dots({ w }: { w: string }) {
  return <span className={`${w} shrink-0 border-t border-dotted border-[#999]`} />;
}

const treeRows: React.ReactNode[] = [
  <span>NC_PROGRAM</span>,
  <div className="flex items-center gap-0.5 pl-2">
    <Dots w="w-2" />
    <Folder />
    <span>未用项</span>
  </div>,
  <div className="flex items-center gap-[3px]">
    <button type="button" aria-label="折叠" className="flex size-[9px] items-center justify-center border border-[#999] bg-white">
      <span className="h-px w-[5px] bg-black" />
    </button>
    <Dots w="w-1.5" />
    <Bang />
    <Folder />
    <span>PROGRAM</span>
  </div>,
  <div className="flex items-center pl-6">
    <Dots w="w-3" />
    <span className="w-[3px]" />
    <Bang />
    <svg viewBox="0 0 16 16" className="ml-1 size-4 shrink-0" aria-hidden="true">
      <path d="M1 4h4l1 5 3 2 6 1v3L8 15l-6-5z" fill="#1a9a96" stroke="#111" />
      <path d="M7 1h4v8H7z" fill="#4450b8" />
      <path d="M7 3l4 1M7 6l4 1" stroke="#a8b0f0" />
      <path d="M12 6h3v3h-3z" fill="#6ad0e0" />
    </svg>
    <span className="flex h-5 flex-1 items-center border border-dotted border-[#15306a] bg-[#3366b8] pl-0.5 text-white">
      CAVITY_MILL
    </span>
  </div>,
];

function ScrollArrow({ d, label }: { d: string; label: string }) {
  return (
    <button type="button" aria-label={label} className="flex size-4 items-center justify-center rounded-[2px] border border-[#b0c4ee] bg-[#c8d8fa]">
      <svg viewBox="0 0 8 8" className="size-2" fill="none" stroke="#30507c" strokeWidth="2" aria-hidden="true">
        <path d={d} />
      </svg>
    </button>
  );
}

function Navigator() {
  return (
    <section className="flex w-[189px] shrink-0 flex-col border-l-2 border-t border-white bg-[#eaeaea] pb-[5px] pl-1.5 pr-[3px] text-xs text-[#222]">
      <div className="flex h-[34px] shrink-0 items-center justify-between px-2 font-bold text-black">
        <h2>操作导航器 - 程序顺序</h2>
        <svg viewBox="0 0 12 12" className="size-3" aria-hidden="true">
          <circle cx="6.500" cy="5.500" r="4" fill="#e8e860" stroke="#111" strokeWidth="1.300" />
          <path d="M1 11l4-4M5 3l4 4" stroke="#111" strokeWidth="1.400" />
        </svg>
      </div>
      <div className="mx-1 flex min-h-0 flex-1 flex-col border border-[#555] bg-[#f6f6f6]">
        <div className="min-h-0 flex-1 overflow-hidden">
          <table className="w-full border-collapse">
            <thead>
              <tr>
                <th className="h-[19px] border-b border-[#999] bg-linear-to-b from-[#f2f2f2] to-[#d6d6d6] p-0 pl-1.5 text-left font-normal leading-none text-black">
                  名称
                </th>
              </tr>
            </thead>
            <tbody>
              {Array.from({ length: 22 }, (_, i) => (
                <tr key={i} className={i % 2 ? "bg-[#eeeeee]" : "bg-[#fafafa]"}>
                  <td className="h-5 p-0 pl-1 leading-none">{treeRows[i]}</td>
                </tr>
              ))}
            </tbody>
          </table>
        </div>
        <div className="flex h-[19px] shrink-0 items-center gap-0.5 bg-[#f6f7fb] px-0.5">
          <ScrollArrow label="向左滚动" d="M6 0L2 4l4 4" />
          <span className="flex h-4 w-6 items-center justify-center gap-0.5 rounded-[2px] border border-[#9cb4e8] bg-[#c4d6fa]">
            {[0, 1, 2, 3].map((n) => (
              <i key={n} className="h-1.5 w-px bg-[#8ca8e0]" />
            ))}
          </span>
          <span className="ml-auto">
            <ScrollArrow label="向右滚动" d="M2 0l4 4-4 4" />
          </span>
        </div>
      </div>
      <div className="mx-1 flex h-3 shrink-0 items-center gap-0.5">
        <span className="h-px flex-1 bg-[#bbb]" />
        <span className="h-1.5 w-[27px] border border-t-white border-[#999] bg-[#ddd]" />
        <span className="h-px flex-1 bg-[#bbb]" />
      </div>
      <div className="mx-1">
        <Section title="相关性" />
        <Section title="细节" />
      </div>
    </section>
  );
}

/* ---------- resource tabs ---------- */

const tabs: { name: string; gap?: boolean; active?: boolean; art: React.ReactNode }[] = [
  {
    name: "装配导航器",
    art: (
      <>
        <path d="M2 3h6v5H2zM9 11h6v5H9z" fill="#e8e234" stroke="#99962a" />
        <path d="M3 9v7M3 13h5M10 8h8" stroke="#888" />
      </>
    ),
  },
  {
    name: "部件导航器",
    art: (
      <>
        <circle cx="5" cy="5" r="3" stroke="#a07878" strokeWidth="1.500" />
        <path d="M4 9v8M4 13h6M10 8h8M12 13h6" stroke="#888" strokeWidth="1.400" />
      </>
    ),
  },
  {
    name: "操作导航器",
    active: true,
    art: (
      <>
        <path d="M3 2h4v8H3z" fill="#4048a8" />
        <path d="M4 12v5M4 14h7M9 8h9M12 15h6" stroke="#666" strokeWidth="1.400" />
      </>
    ),
  },
  {
    name: "机床导航器",
    art: (
      <>
        <path d="M3 2l9 4v11l-9-3zM3 7l9 3M6 3v12M9 4v12" fill="#f8e8c8" stroke="#b88848" />
        <path d="M9 11l5-2 5 3-2 5-6-1z" fill="#387ac8" />
        <path d="M13 6l4 2-3 2z" fill="#e89838" />
      </>
    ),
  },
  {
    name: "重用库",
    art: (
      <>
        <circle cx="6" cy="8" r="4" fill="#e8cc90" />
        <path d="M9 4l7-2 2 4-6 3z" fill="#eaa83c" />
        <path d="M4 12h13v5H4z" fill="#c8c8c8" stroke="#999" />
        <path d="M6 14h9" stroke="#b84838" strokeWidth="1.500" />
      </>
    ),
  },
  {
    name: "装配约束",
    art: (
      <>
        <path d="M3 2h4v11l3 3H1l2-3z" fill="#4a88d8" stroke="#2a58a0" />
        <path d="M11 4l7-2v12l-7 2z" fill="#f0b838" stroke="#a87820" />
        <circle cx="15" cy="7" r="1.300" fill="#7a5010" />
      </>
    ),
  },
  {
    name: "信息",
    gap: true,
    art: (
      <>
        <circle cx="8" cy="12" r="6" fill="#2a70c0" />
        <path d="M8 8v2M8 11v5" stroke="#fff" strokeWidth="2" />
        <path d="M9 4c4 0 7 3 7 7M10 1c5 0 9 4 9 9" stroke="#4a88d0" strokeWidth="1.300" />
      </>
    ),
  },
  {
    name: "网页",
    gap: true,
    art: (
      <>
        <path d="M3 3h9l4 4v11H3z" fill="#f4f0b8" stroke="#999" />
        <circle cx="10" cy="11" r="4.500" fill="#3a80c8" />
        <path d="M8 9l4-1 1 3-4 3z" fill="#4aa858" />
      </>
    ),
  },
  {
    name: "历史",
    gap: true,
    art: (
      <>
        <circle cx="10" cy="10" r="7.500" fill="#f4f4f4" stroke="#777" strokeWidth="2" />
        <path d="M10 5v5.500h4.500" stroke="#111" strokeWidth="1.500" />
        <circle cx="10" cy="10" r="5.500" stroke="#999" strokeDasharray="1 2" />
      </>
    ),
  },
  {
    name: "系统",
    art: (
      <>
        <path d="M2 4h6v13H2zM8 3h10v13H8z" fill="#f2f2f2" stroke="#999" />
        <path d="M11 6v7M15 6v7" stroke="#38804a" strokeWidth="1.500" />
        <path d="M10 9h2M14 9h3" stroke="#c83838" strokeWidth="2" />
      </>
    ),
  },
  {
    name: "调色板",
    art: (
      <>
        <path d="M2 2h7v4H2z" fill="#e02818" />
        <path d="M2 6h7v3H2z" fill="#f4d820" />
        <path d="M2 9h7v4H2z" fill="#28c050" />
        <path d="M2 13h7v4H2z" fill="#28a0e8" />
        <path d="M12 7l6 10" stroke="#5048c0" strokeWidth="2.500" />
        <path d="M11 3v4M9 6l5-2" stroke="#e8e040" strokeWidth="1.500" />
      </>
    ),
  },
  {
    name: "加工向导",
    art: (
      <>
        <path d="M3 5h4v10H3z" fill="#4850b8" />
        <path d="M7 10l9-5M8 9l9 7M6 10h8" stroke="#2c3048" strokeWidth="2" />
        <path d="M13 6l5 9" stroke="#5870c8" strokeWidth="2.500" />
        <circle cx="12" cy="4" r="2" fill="#ece858" />
      </>
    ),
  },
  {
    name: "角色",
    art: (
      <>
        <circle cx="14" cy="5" r="4" fill="#e8b040" />
        <path d="M9 15c1-7 9-7 10 0z" fill="#38905a" />
        <circle cx="6" cy="9" r="3.500" fill="#8a4838" />
        <circle cx="6" cy="10" r="2" fill="#f0c8a0" />
        <path d="M1 18c1-6 9-6 10 0z" fill="#8a60c8" />
      </>
    ),
  },
  {
    name: "系统可视化场景",
    art: (
      <>
        <path d="M2 4h16v12H2z" fill="#3f68b0" stroke="#8a9ab0" />
        <path d="M2 13c4-5 7-2 9-3s5 0 7 2v4H2z" fill="#f0f4fa" />
        <circle cx="14" cy="7" r="2" fill="#f8ec70" />
      </>
    ),
  },
];

function ResourceBar() {
  return (
    <nav aria-label="资源条" className="flex w-[27px] shrink-0 flex-col items-start gap-0.5 bg-[#b2b2b2] pt-4">
      {tabs.map((t) => (
        <button
          type="button"
          key={t.name}
          aria-label={t.name}
          className={`flex h-8 shrink-0 items-center justify-center rounded-r border border-l-0 border-[#777] ${
            t.active ? "w-6 bg-[#f4f4f4]" : "w-[22px] bg-linear-to-r from-[#d4d4d4] to-[#f0f0f0]"
          } ${t.gap ? "mt-3" : ""}`}
        >
          <Ic size="size-[18px]">{t.art}</Ic>
        </button>
      ))}
    </nav>
  );
}

/* ---------- bottom bars ---------- */

function FlatSelect({ label, value, className }: { label: string; value: string; className: string }) {
  return (
    <div className={`relative h-5 shrink-0 rounded-[3px] border border-[#999] bg-[#d6d6d6] ${className}`}>
      <select
        aria-label={label}
        disabled
        className="block h-full w-full appearance-none bg-transparent pl-0.5 text-xs leading-4 text-[#999] opacity-100"
      >
        <option>{value}</option>
      </select>
      <span className="pointer-events-none absolute inset-y-0 right-0 flex w-[17px] items-center justify-center border-l border-[#aaa] bg-[#efefef]">
        <svg viewBox="0 0 10 6" className="h-[5px] w-2" aria-hidden="true">
          <path d="M0 0h10L5 6z" fill="#888" />
        </svg>
      </span>
    </div>
  );
}

function SelectionBar() {
  return (
    <div className="flex h-[31px] shrink-0 items-center border-b border-t border-b-[#aaa] border-t-white bg-linear-to-b from-[#cfcfcf] to-[#e2e2e2] pl-1.5 pr-1">
      <FlatSelect label="类型过滤器" value="" className="w-[143px]" />
      <FlatSelect label="选择范围" value="整个装配" className="ml-2 w-[151px]" />
      <div className="ml-1.5 flex h-full w-[220px] items-center justify-between">
        <Tool label="规则">
          <Ic>
            <path d="M2 7l4-2v11l-4-2zM7 5l3-2v14l-3-2z" fill="#8c8c8c" />
            <path d="M12 6c2-4 6-1 4 2l-2 2M12 12h4v4h-4z" stroke="#8c8c84" strokeWidth="2" />
          </Ic>
        </Tool>
        <Sep />
        <Tool label="捕捉点">
          <Ic>
            <path d="M2 2h16v16H2zM10 2v10M2 9h12" stroke="#a83a3a" strokeWidth="1.300" />
            <circle cx="8" cy="9" r="3" stroke="#444" />
            <path d="M9 9h9l-3 4v5l-3-2v-3z" fill="#ecc838" stroke="#a88420" strokeWidth="0.600" />
          </Ic>
        </Tool>
        <Caret />
        <Tool label="返回">
          <Ic size="size-4">
            <path d="M1 12l6-5v3c5 0 8-1 9-5 3 6-1 11-9 10v3z" fill="#38a080" stroke="#1f6650" strokeWidth="0.800" />
          </Ic>
        </Tool>
        <Tool label="实体">
          <Ic>
            <path d="M2 8l6-5 8 1 3 5-5 7-10-1z" fill="#8b8b8b" />
            <path d="M3 10l12 0 3-2" stroke="#aaa" />
          </Ic>
        </Tool>
        <Tool label="相切">
          <Ic>
            <path d="M2 6c2-4 6-4 7 0M12 6v12M6 12h12" stroke="#888" strokeWidth="1.800" />
            <circle cx="12" cy="12" r="3" stroke="#888" />
          </Ic>
        </Tool>
        <Tool label="拔模">
          <Ic>
            <path d="M2 5l8-3 6 4v10h-4V9L8 8l-3 2z" fill="#8b8b8b" />
          </Ic>
        </Tool>
        <Sep />
        <Tool label="框选">
          <Ic>
            <path d="M3 4h14v12H3z" stroke="#555" strokeDasharray="3 2" />
          </Ic>
        </Tool>
        <Caret />
        <Sep />
        <Tool label="视图方位">
          <Ic>
            <path d="M2 6l8-3 8 3-8 3z" fill="#cfe0ff" stroke="#5888e0" strokeWidth="0.600" />
            <path d="M2 6l8 3v9l-8-3z" fill="#78acf4" />
            <path d="M18 6l-8 3v9l8-3z" fill="#2c60d8" />
            <path d="M10 1v5" stroke="#d05050" />
          </Ic>
        </Tool>
      </div>
      <span className="ml-auto">
        <Caret low />
      </span>
    </div>
  );
}

function StatusBar() {
  return (
    <div className="flex h-[23px] shrink-0 items-center bg-[#dcdcdc] pl-1 text-[13px] font-bold text-black">
      <span className="w-[461px]">指定参数</span>
      <Sep />
      <div className="ml-auto flex h-full items-center">
        <Sep />
        <span className="w-[18px]" />
        <Sep />
        <span className="w-[34px]" />
        <Sep />
        <button type="button" aria-label="全屏" className="mx-1 flex">
          <svg viewBox="0 0 16 16" className="size-4" fill="none" stroke="#333" aria-hidden="true">
            <path d="M1 4V1h3M12 1h3v3M15 12v3h-3M4 15H1v-3" strokeWidth="1.300" />
            <path d="M3.500 3.500h9v9h-9z" fill="#fff" />
            <path d="M5.500 6h5v4.500h-5z" fill="#6a9ac8" stroke="#3a688c" />
          </svg>
        </button>
        <span className="w-3.5" />
      </div>
    </div>
  );
}

function Taskbar() {
  return (
    <footer className="flex h-7 shrink-0 items-stretch bg-linear-to-b from-[#4a8cf0] via-[#1f54d0] via-15% to-[#245edc] text-xs text-white">
      <button
        type="button"
        className="flex w-24 items-center gap-2 rounded-r-xl bg-linear-to-b from-[#6cc060] via-[#3a9438] via-20% to-[#2f8a30] pl-2.5 text-[19px] italic"
      >
        <svg viewBox="0 0 20 20" className="size-5" aria-hidden="true">
          <path d="M3 4c3-2 5-1 7 0L8 10c-2-1-4-1-7 0z" fill="#f0602c" />
          <path d="M11 4c3 2 5 1 8 0l-2 6c-3 1-5 1-8 0z" fill="#7cc83c" />
          <path d="M1 11c3-1 5-1 7 0l-2 6c-2-1-4-1-6 0z" fill="#4a90f0" />
          <path d="M9 11c3 1 5 1 8 0l-2 6c-3 1-5 1-8 0z" fill="#f8c838" />
        </svg>
        <span className="leading-none">开始</span>
      </button>
      <div className="ml-3 flex w-[84px] items-center justify-between">
        <a href="#ie" aria-label="Internet Explorer">
          <Ic size="size-[18px]">
            <path d="M16 14c-6 5-12 1-11-4s10-6 11 1H6" stroke="#58b4f8" strokeWidth="3" />
            <path d="M2 18C-1 12 9 1 18 3" stroke="#f0cc48" strokeWidth="1.800" />
          </Ic>
        </a>
        <a href="#desktop" aria-label="显示桌面">
          <Ic size="size-[18px]">
            <rect x="3" y="4" width="13" height="13" rx="3" fill="#e8f4ff" stroke="#70b0e8" />
            <path d="M13 12c-4 3-7 1-6-2s6-3 6 0H8M11 13l7-10" stroke="#3478c8" strokeWidth="1.800" />
          </Ic>
        </a>
        <a href="#qq" aria-label="QQ">
          <Ic size="size-[18px]">
            <path d="M4 16c-2-4 1-6 2-8 0-8 8-8 8 0 1 2 4 4 2 8z" fill="#18181c" />
            <ellipse cx="10" cy="13" rx="4.500" ry="5" fill="#fff" />
            <circle cx="8.500" cy="5.500" r="1.500" fill="#fff" />
            <circle cx="12" cy="5.500" r="1.500" fill="#fff" />
            <path d="M5 9c3 2 7 2 10 0v2c-3 2-7 2-10 0z" fill="#e02c20" />
            <path d="M7 7h6l-3 2zM4 17h5v2H4zM11 17h5v2h-5z" fill="#f4b028" />
          </Ic>
        </a>
        <span className="pb-3 text-xs leading-none">»</span>
      </div>
      <button type="button" className="ml-2 mt-0.5 flex w-[159px] items-center gap-1 rounded-[2px] border border-[#1a46a8] bg-[#1d4cb8] pl-2">
        <Ic size="size-[18px]">
          <path d="M3 2l6 3 5-2 1 8-6 4-4-5z" fill="#d83028" />
          <path d="M2 12c4 6 16 2 17-7-5 8-11 8-17 7z" fill="#d8ecff" />
          <path d="M5 14l6-5 2 3-5 6z" fill="#58b0f0" />
        </Ic>
        <span className="font-['DejaVu_Sans_Mono','Noto_Sans_CJK_SC',monospace] text-[10px]">
          NX 7 - <span className="text-xs">加工</span> - [s...
        </span>
      </button>
      <div className="ml-auto flex items-center">
        <svg viewBox="0 0 16 12" className="mr-[21px] h-3 w-4" aria-hidden="true">
          <path d="M1 4h14v7H1z" fill="#f6f6f0" stroke="#111" />
          <path d="M3 6h11M3 8h11" stroke="#111" strokeDasharray="1 1" />
          <path d="M6 3c0-2 4 0 4-2" stroke="#111" fill="none" />
        </svg>
      </div>
      <div className="flex w-[183px] items-center gap-0.5 border-l border-[#0c58b8] bg-linear-to-b from-[#3cb4f8] via-[#1088e4] via-15% to-[#1894ec] pl-2 pr-[11px]">
        <Ic size="size-4">
          <path d="M1 5h12v10H1zM14 8l5-3v9l-5-3z" fill="#f0f0f0" stroke="#111" />
          <path d="M3 7h8M3 10h8M3 13h8" stroke="#222" strokeWidth="1.500" strokeDasharray="2 1" />
        </Ic>
        <Ic size="size-4">
          <circle cx="10" cy="10" r="9" fill="#f4fff0" />
          <circle cx="10" cy="10" r="5.500" stroke="#2c9830" strokeWidth="3" fill="#143c18" />
        </Ic>
        <Ic size="size-4">
          <path d="M1 7h4l6-6v18l-6-6H1z" fill="#e86048" stroke="#6a1c18" />
          <path d="M13 4v12M17 4v12" stroke="#781818" strokeWidth="1.800" />
        </Ic>
        <Ic size="size-4">
          <path d="M10 1l8 3c0 8-3 12-8 15C5 16 2 12 2 4z" fill="#38a848" stroke="#e8f4e8" strokeWidth="1.500" />
          <path d="M6 9l3 4 6-7" stroke="#fff" strokeWidth="2.500" />
        </Ic>
        <Ic size="size-4">
          <circle cx="8" cy="8" r="7" fill="#888" stroke="#ccc" />
          <circle cx="9" cy="8" r="3.500" fill="#303840" />
          <path d="M13 17c3-1 5-3 5-7" stroke="#c8d8e8" strokeWidth="2" />
        </Ic>
        <Ic size="size-4">
          <path d="M3 2h14v11l-7 6-7-6z" fill="#4cc838" stroke="#e0ffd8" />
          <path d="M10 5v8M6 9h8" stroke="#fff" strokeWidth="2.500" />
        </Ic>
        <Ic size="size-4">
          <path d="M1 10c4-7 12-7 18-5v11C10 18 4 15 1 10z" fill="#70b830" />
          <path d="M4 10c4-5 9-3 11 0-4 4-8 3-11 0z" stroke="#e8ffd0" strokeWidth="1.500" />
        </Ic>
        <time className="ml-auto font-['DejaVu_Sans_Mono',monospace] text-[10px]">19:31</time>
      </div>
    </footer>
  );
}

export default function App() {
  return (
    <div className={`relative flex h-screen flex-col overflow-hidden bg-[#ddd] ${CJK}`}>
      <TitleBar />
      <MenuBar />
      <ToolbarOne />
      <ToolbarTwo />
      <div className="flex min-h-0 flex-1">
        <ModelView />
        <Navigator />
        <ResourceBar />
      </div>
      <SelectionBar />
      <StatusBar />
      <Taskbar />
      <PromoBanner />
      <span className="absolute right-[38px] top-0 text-[15px] font-bold leading-4 text-[#b41818]">0:0/4:47</span>
      <span className="absolute bottom-[74px] left-1 font-['Liberation_Sans',sans-serif] text-[11px] leading-3 text-[#1822c8]">11</span>
      <MillDialog />
    </div>
  );
}
